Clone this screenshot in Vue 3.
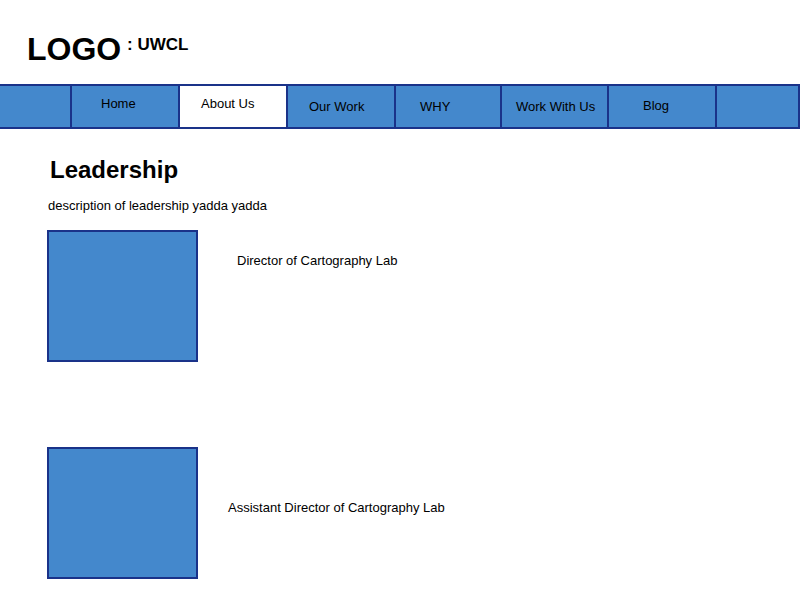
<script setup>
const tabs = [
  { id: 'start', label: '', width: 72 },
  { id: 'home', label: 'Home', width: 108 },
  { id: 'about', label: 'About Us', width: 108 },
  { id: 'work', label: 'Our Work', width: 108 },
  { id: 'why', label: 'WHY', width: 106 },
  { id: 'join', label: 'Work With Us', width: 107 },
  { id: 'blog', label: 'Blog', width: 108 },
  { id: 'end', label: '', width: 83 },
]
const people = [
  { id: 'director', title: 'Director of Cartography Lab' },
  { id: 'assistant', title: 'Assistant Director of Cartography Lab' },
]
</script>

<template>
  <div class="page">
    <header class="brand">
      <span class="logo">LOGO</span>
      <span class="name">: UWCL</span>
    </header>
    <nav class="nav">
      <a v-for="t in tabs" :key="t.id" class="tab" :class="t.id" :style="{ width: t.width + 'px' }">{{ t.label }}</a>
    </nav>
    <main class="content">
      <h1>Leadership</h1>
      <p class="intro">description of leadership yadda yadda</p>
      <section v-for="p in people" :key="p.id" class="person" :class="p.id">
        <div class="photo"></div>
        <p class="role">{{ p.title }}</p>
      </section>
    </main>
  </div>
</template>

<style>
body { background: #fff; }
</style>
<style scoped>
.page { width: 800px; height: 600px; overflow: hidden; box-sizing: border-box; background: #fff; color: #000; font-family: "Liberation Sans", Arial, sans-serif; font-size: 13px; line-height: 16px; }
.page * { box-sizing: border-box; }
.brand { height: 84px; display: flex; align-items: flex-start; padding-left: 27px; font-weight: bold; white-space: nowrap; }
.logo { width: 100px; font-size: 32px; line-height: 38px; padding-top: 30px; }
.name { font-size: 17px; line-height: 20px; padding-top: 35px; }
.nav { display: flex; height: 45px; background: #4488cc; border: 2px solid #1a3289; border-left: 0; border-right: 0; }
.tab { flex: none; height: 41px; border-right: 2px solid #1a3289; white-space: nowrap; }
.home { padding: 10px 0 0 29px; }
.about { padding: 10px 0 0 21px; background: #fff; }
.work { padding: 13px 0 0 21px; }
.why { padding: 13px 0 0 24px; }
.join { padding: 13px 0 0 14px; }
.blog { padding: 12px 0 0 34px; }
.content { padding-left: 47px; }
h1 { margin: 0; padding: 26px 0 0 3px; font-size: 24px; line-height: 30px; height: 69px; }
.intro { margin: 0; padding-left: 1px; height: 32px; }
.person { display: flex; height: 217px; }
.photo { width: 151px; height: 132px; background: #4488cc; border: 2px solid #1a3289; }
.role { margin: 0; padding: 23px 0 0 39px; }
.assistant .role { padding: 53px 0 0 30px; }
</style>
